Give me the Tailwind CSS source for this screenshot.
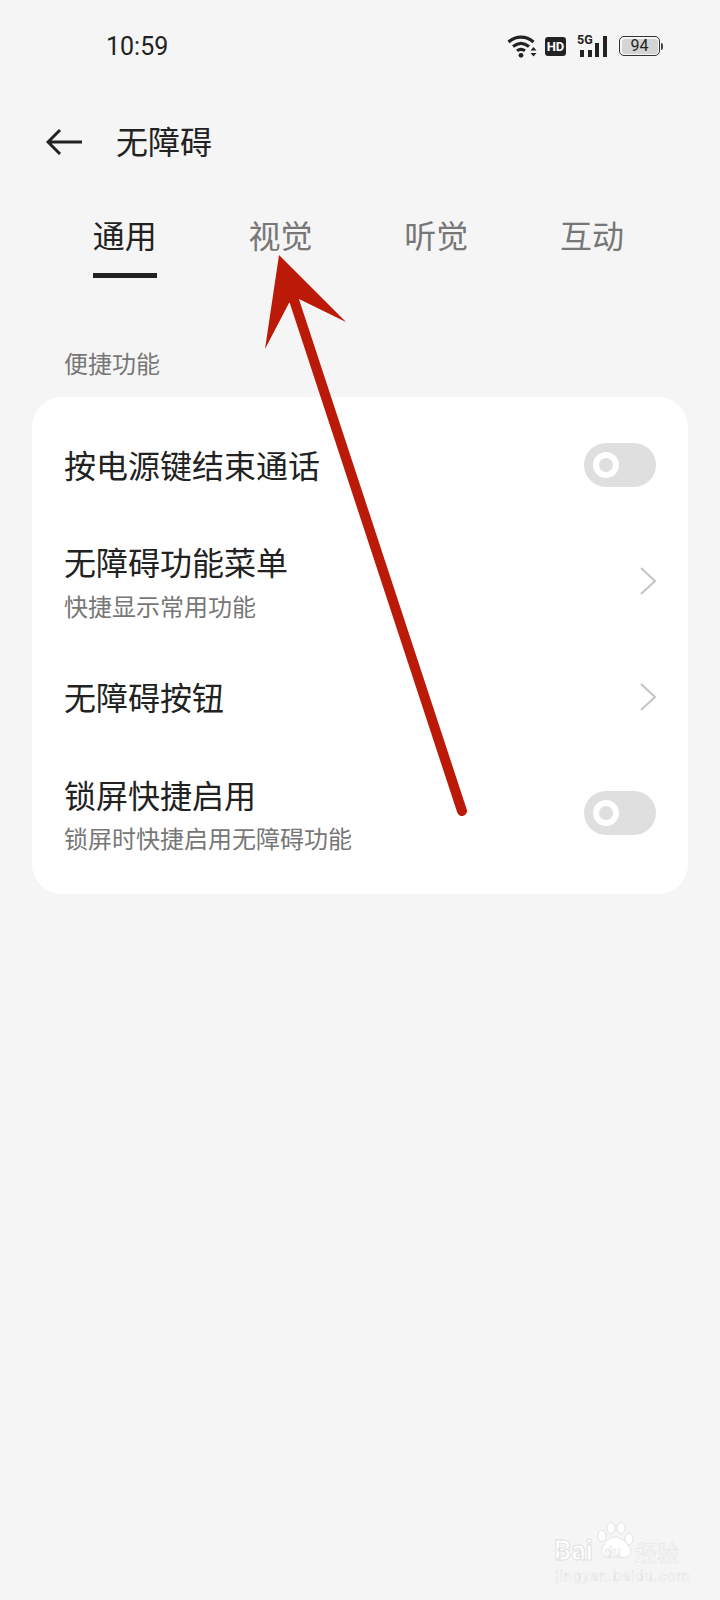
<!DOCTYPE html>
<html lang="zh-CN">

<head>
    <meta charset="UTF-8" />
    <meta name="viewport" content="width=device-width, initial-scale=1.0" />
    <title>无障碍</title>
    <script src="https://cdn.jsdelivr.net/npm/@tailwindcss/browser@4"></script>
</head>

<body class="bg-[#f5f5f5] font-['Noto_Sans_CJK_SC','Noto_Sans',sans-serif] text-[#222]">
    <div class="relative w-[720px] h-[1600px] overflow-hidden">

        <!-- status bar -->
        <div class="flex items-center justify-between h-[92px] pl-[106px] pr-[57px]">
            <span class="font-['Roboto',sans-serif] text-[25px] leading-none text-[#222]">10:59</span>
            <div class="flex items-center">
                <svg class="w-[30px] h-[24px]" viewBox="0 0 30 24" fill="none">
                    <path d="M1.500 8C9 1.500 19 1.500 26.500 8" stroke="#222" stroke-width="3.200" />
                    <path d="M6 12.500C11 8.500 17 8.500 22 12.500" stroke="#222" stroke-width="3.200" />
                    <path d="M10 16.800C12.500 15 15.500 15 18 16.800" stroke="#222" stroke-width="3" />
                    <circle cx="14" cy="21.300" r="2.400" fill="#222" />
                    <path d="M23.500 16.500h6l-3-3.500zM23.500 19h6l-3 3.500z" fill="#222" />
                </svg>
                <span class="ml-[8px] flex items-center justify-center w-[21px] h-[19px] rounded-[3px] bg-[#222] font-['Roboto',sans-serif] font-bold text-[13px] leading-none text-white">HD</span>
                <div class="relative ml-[11px] w-[30px] h-[21px]">
                    <span class="absolute left-0 top-[-2px] font-['Roboto',sans-serif] font-bold text-[12.500px] leading-none text-[#222]">5G</span>
                    <div class="absolute inset-0 flex items-end gap-[3.500px] pl-[3px]">
                        <i class="block w-[4px] h-[7px] bg-[#222]"></i>
                        <i class="block w-[4px] h-[7px] bg-[#222]"></i>
                        <i class="block w-[4px] h-[14px] bg-[#222]"></i>
                        <i class="block w-[4px] h-[21px] bg-[#222]"></i>
                    </div>
                </div>
                <div class="ml-[12px] flex items-center">
                    <div class="flex items-center justify-center w-[41px] h-[20px] rounded-[5px] border-[1.500px] border-[#333] p-[1.500px]">
                        <span class="flex items-center justify-center w-full h-full rounded-[3px] bg-[#d4d4d4] font-['Roboto',sans-serif] text-[16px] leading-none text-[#222]">94</span>
                    </div>
                    <i class="block ml-[1px] w-[2px] h-[7px] rounded-r-sm bg-[#444]"></i>
                </div>
            </div>
        </div>

        <!-- header -->
        <div class="flex items-center h-[100px] pl-[46px]">
            <svg class="w-[36px] h-[28px]" viewBox="0 0 36 28" fill="none">
                <path d="M14 2L2 14L14 26M2 14H36" stroke="#222" stroke-width="3" />
            </svg>
            <h1 class="ml-[34px] mb-[4px] text-[32px] leading-[44px] font-normal">无障碍</h1>
        </div>

        <!-- tabs -->
        <div class="grid grid-cols-4 w-[623px] ml-[47px] pt-[20px] text-[32px] leading-[44px]">
            <div class="flex flex-col items-center">
                <span>通用</span>
                <i class="block mt-[17px] w-[64px] h-[5px] bg-[#222]"></i>
            </div>
            <span class="text-center text-[#777]">视觉</span>
            <span class="text-center text-[#777]">听觉</span>
            <span class="text-center text-[#777]">互动</span>
        </div>

        <p class="mt-[69px] mb-[18px] pl-[64px] text-[24px] leading-[32px] text-[#777]">便捷功能</p>

        <!-- settings card -->
        <div class="mx-[32px] w-[656px] h-[497px] rounded-[30px] bg-white pl-[32px] pr-[32px]">
            <div class="flex items-center justify-between h-[133px]">
                <span class="text-[32px] leading-[44px]">按电源键结束通话</span>
                <div class="flex items-center w-[72px] h-[44px] rounded-full bg-[#dfdfdf] pl-[9px] mt-[2px]">
                    <i class="block w-[26px] h-[26px] rounded-full border-[6px] border-white bg-[#dfdfdf]"></i>
                </div>
            </div>
            <div class="flex items-center justify-between h-[101px]">
                <div>
                    <p class="text-[32px] leading-[44px]">无障碍功能菜单</p>
                    <p class="text-[24px] leading-[32px] text-[#777] mt-[7px]">快捷显示常用功能</p>
                </div>
                <svg class="w-[16px] h-[28px]" viewBox="0 0 16 28" fill="none">
                    <path d="M1 1L15 14L1 27" stroke="#c4c4c4" stroke-width="2" />
                </svg>
            </div>
            <div class="flex items-center justify-between h-[129px]">
                <span class="text-[32px] leading-[44px]">无障碍按钮</span>
                <svg class="w-[16px] h-[28px] mt-[3px]" viewBox="0 0 16 28" fill="none">
                    <path d="M1 1L15 14L1 27" stroke="#c4c4c4" stroke-width="2" />
                </svg>
            </div>
            <div class="flex items-center justify-between h-[106px]">
                <div>
                    <p class="text-[32px] leading-[44px]">锁屏快捷启用</p>
                    <p class="text-[24px] leading-[32px] text-[#777] mt-[6px]">锁屏时快捷启用无障碍功能</p>
                </div>
                <div class="flex items-center w-[72px] h-[44px] rounded-full bg-[#dfdfdf] pl-[9px]">
                    <i class="block w-[26px] h-[26px] rounded-full border-[6px] border-white bg-[#dfdfdf]"></i>
                </div>
            </div>
        </div>

        <!-- red annotation arrow -->
        <svg class="absolute left-0 top-0 w-[720px] h-[1600px] pointer-events-none" viewBox="0 0 720 1600" fill="none">
            <path d="M462 811L294 300" stroke="#bb1a08" stroke-width="10" stroke-linecap="round" />
            <path d="M279 255L346 322L299 299L289 303L265 349Z" fill="#bb1a08" />
        </svg>

        <!-- watermark -->
        <div class="absolute left-[552px] top-[1520px] w-[130px] h-[62px] text-white">
            <svg class="absolute left-[45px] top-[2px] w-[38px] h-[38px]" viewBox="0 0 38 38" fill="#fff" stroke="#e4e4e4" stroke-width="1">
                <ellipse cx="5" cy="14" rx="4" ry="5.500" />
                <ellipse cx="14" cy="6" rx="4" ry="5.500" />
                <ellipse cx="24" cy="6" rx="4" ry="5.500" />
                <ellipse cx="32" cy="17" rx="4" ry="5.500" />
                <path d="M18 15C26 15 36 26 33 32C31 37 24 35 18 35C12 35 7 37 5 32C3 26 10 15 18 15Z" />
            </svg>
            <span class="absolute left-[2px] top-[15px] font-['Roboto',sans-serif] font-bold text-[27px] leading-[32px] text-white [-webkit-text-stroke:0.800px_#dedede]">Bai</span>
            <span class="absolute left-[52px] top-[23px] font-['Roboto',sans-serif] font-bold text-[15px] leading-[18px] text-white [-webkit-text-stroke:0.500px_#dedede]">du</span>
            <span class="absolute left-[83px] top-[16px] text-[22px] leading-[30px] whitespace-nowrap text-white [-webkit-text-stroke:0.500px_#dedede]">经验</span>
            <span class="absolute left-[3px] top-[48px] font-['Roboto',sans-serif] text-[15px] leading-[16px] tracking-[0.800px] whitespace-nowrap text-[#fdfdfd] [-webkit-text-stroke:0.400px_#dddddd]">jingyan.baidu.com</span>
        </div>
    </div>
</body>

</html>
